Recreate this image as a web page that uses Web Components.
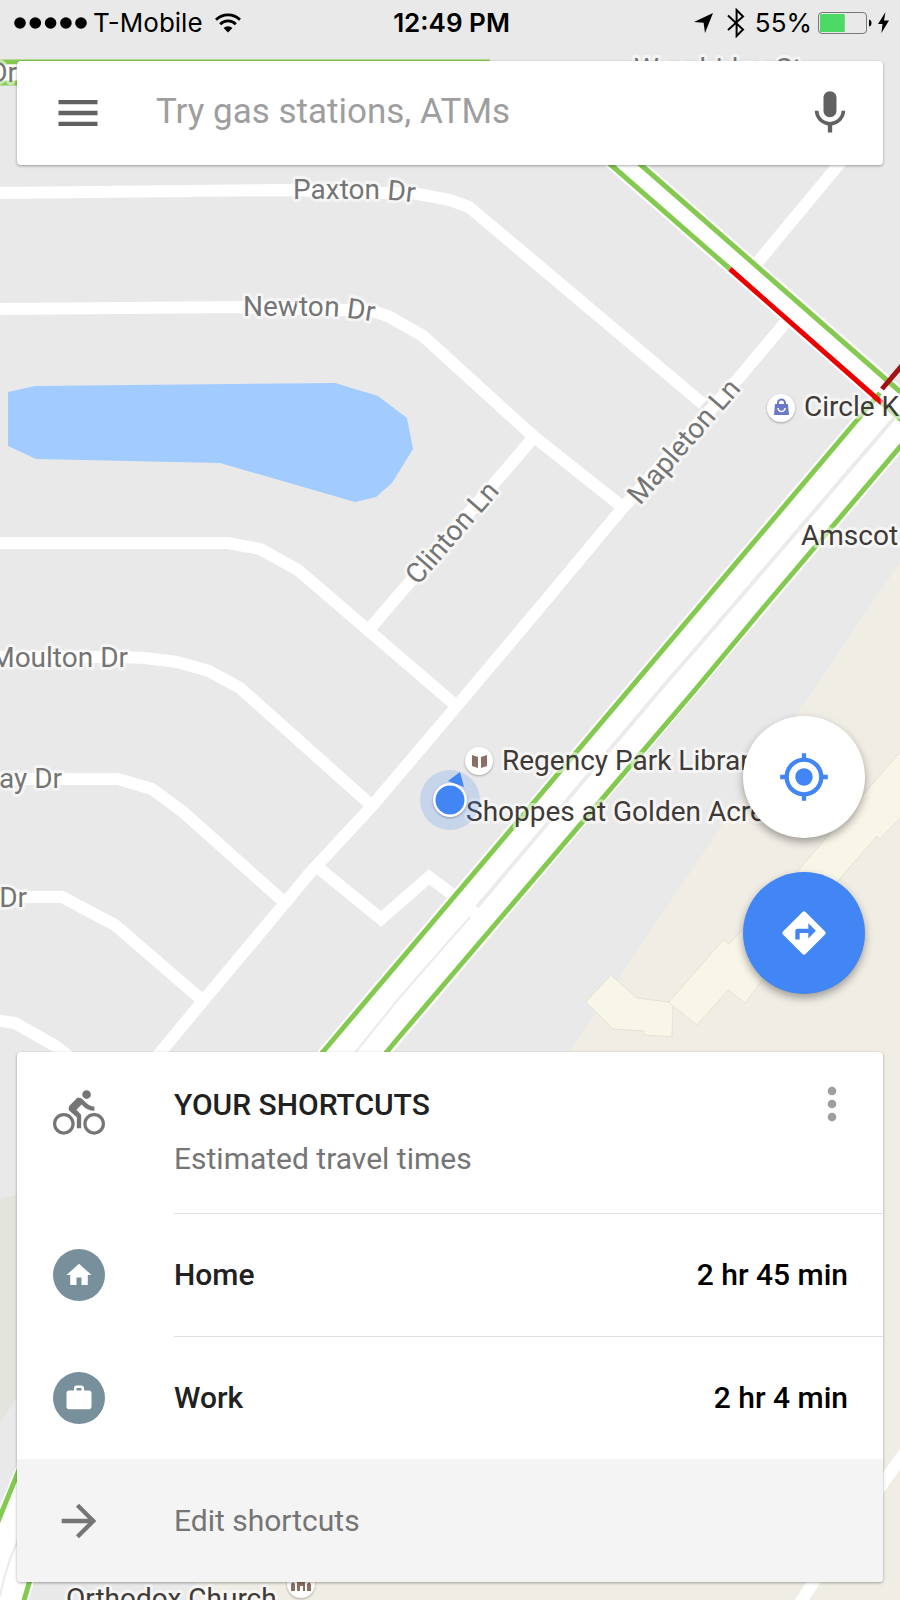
<!DOCTYPE html>
<html lang="en">
<head>
<meta charset="utf-8">
<meta name="viewport" content="width=device-width, initial-scale=1">
<title>Maps</title>
<style>
    body{
        margin: 0;
        font-family: Roboto, "Liberation Sans", sans-serif;
        background: #e9e9e9;
    }
</style>
</head>
<body>
<maps-app>
    <map-canvas slot="map"></map-canvas>
    <status-bar carrier="T-Mobile" time="12:49 PM" battery="55"></status-bar>
    <search-bar placeholder="Try gas stations, ATMs"></search-bar>
    <map-actions>
        <round-button label="My location"><ui-icon name="location"></ui-icon></round-button>
        <round-button label="Directions" primary><ui-icon name="directions"></ui-icon></round-button>
    </map-actions>
    <shortcuts-card>
        <span slot="title">YOUR SHORTCUTS</span>
        <span slot="subtitle">Estimated travel times</span>
        <shortcut-row icon="home" time="2 hr 45 min">Home</shortcut-row>
        <shortcut-row icon="work" time="2 hr 4 min">Work</shortcut-row>
        <span slot="action">Edit shortcuts</span>
    </shortcuts-card>
</maps-app>

<script>
const ICONS = {
    menu: 'M3 18h18v-2H3v2zm0-5h18v-2H3v2zm0-7v2h18V6H3z',
    mic: 'M12 14c1.66 0 2.99-1.34 2.99-3L15 5c0-1.66-1.34-3-3-3S9 3.34 9 5v6c0 1.66 1.34 3 3 3zm5.3-3c0 3-2.54 5.1-5.3 5.1S6.7 14 6.7 11H5c0 3.41 2.72 6.23 6 6.72V21h2v-3.28c3.28-.48 6-3.3 6-6.72h-1.7z',
    location: 'M12 8c-2.21 0-4 1.79-4 4s1.79 4 4 4 4-1.79 4-4-1.79-4-4-4zm8.94 3c-.46-4.17-3.77-7.48-7.94-7.94V1h-2v2.06C6.83 3.52 3.52 6.83 3.06 11H1v2h2.06c.46 4.17 3.77 7.48 7.94 7.94V23h2v-2.06c4.17-.46 7.48-3.77 7.94-7.94H23v-2h-2.06zM12 19c-3.87 0-7-3.13-7-7s3.13-7 7-7 7 3.13 7 7-3.13 7-7 7z',
    directions: 'M21.71 11.29l-9-9c-.39-.39-1.02-.39-1.41 0l-9 9c-.39.39-.39 1.02 0 1.41l9 9c.39.39 1.02.39 1.41 0l9-9c.39-.38.39-1.01 0-1.41zM14 14.5V12h-4v3H8v-4c0-.55.45-1 1-1h5V7.5l3.5 3.5-3.5 3.5z',
    bike: 'M15.5 5.5c1.1 0 2-.9 2-2s-.9-2-2-2-2 .9-2 2 .9 2 2 2zM5 12c-2.8 0-5 2.2-5 5s2.2 5 5 5 5-2.2 5-5-2.2-5-5-5zm0 8.5c-1.9 0-3.5-1.600-3.5-3.5s1.6-3.5 3.5-3.5 3.5 1.6 3.5 3.5-1.6 3.5-3.5 3.5zm5.8-10l2.4-2.4.8.8c1.3 1.3 3 2.1 5.1 2.1V9c-1.5 0-2.7-.6-3.6-1.5l-1.9-1.9c-.5-.4-1-.6-1.6-.6s-1.1.2-1.4.6L7.8 8.4c-.4.4-.6.9-.6 1.4 0 .6.2 1.1.6 1.4L11 14v5h2v-6.2l-2.2-2.3zM19 12c-2.8 0-5 2.2-5 5s2.2 5 5 5 5-2.2 5-5-2.2-5-5-5zm0 8.5c-1.9 0-3.5-1.6-3.5-3.5s1.6-3.5 3.5-3.5 3.5 1.6 3.5 3.5-1.6 3.5-3.5 3.5z',
    more: 'M12 8c1.1 0 2-.9 2-2s-.9-2-2-2-2 .9-2 2 .9 2 2 2zm0 2c-1.1 0-2 .9-2 2s.9 2 2 2 2-.9 2-2-.9-2-2-2zm0 6c-1.1 0-2 .9-2 2s.9 2 2 2 2-.9 2-2-.9-2-2-2z',
    home: 'M10 20v-6h4v6h5v-8h3L12 3 2 12h3v8z',
    work: 'M20 6h-4V4c0-1.11-.89-2-2-2h-4c-1.11 0-2 .89-2 2v2H4c-1.11 0-1.99.89-1.99 2L2 19c0 1.11.89 2 2 2h16c1.11 0 2-.89 2-2V8c0-1.11-.89-2-2-2zm-6 0h-4V4h4v2z',
    arrow: 'M12 4l-1.41 1.41L16.17 11H4v2h12.17l-5.58 5.59L12 20l8-8z'
};

class UiIcon extends HTMLElement{
    constructor(){
        super();
        this.attachShadow({mode: 'open'});
    }

    connectedCallback(){
        this.shadowRoot.innerHTML = `
            <style>
                :host{
                    display: block;
                    flex: none;
                    width: var(--icon-size, 52px);
                    height: var(--icon-size, 52px);
                }
                svg{
                    display: block;
                    width: 100%;
                    height: 100%;
                    fill: currentColor;
                }
            </style>
            <svg viewBox="0 0 24 24" aria-hidden="true"><path d="${ICONS[this.getAttribute('name')]}"/></svg>
        `;
    }
}

class MapsApp extends HTMLElement{
    constructor(){
        super();
        this.attachShadow({mode: 'open'});
        this.shadowRoot.innerHTML = `
            <style>
                :host{
                    display: flex;
                    flex-direction: column;
                    position: relative;
                    min-height: 100vh;
                    overflow: hidden;
                }
                /* the map fills the screen below the other parts */
                .map{
                    position: absolute;
                    inset: 0;
                }
                main{
                    position: relative;
                    flex: 1;
                    display: flex;
                    flex-direction: column;
                    padding-bottom: 18px;
                }
            </style>
            <div class="map"><slot name="map"></slot></div>
            <main><slot></slot></main>
        `;
    }
}

class StatusBar extends HTMLElement{
    constructor(){
        super();
        this.attachShadow({mode: 'open'});
    }

    connectedCallback(){
        const battery = Number(this.getAttribute('battery'));
        this.shadowRoot.innerHTML = `
            <style>
                :host{
                    display: grid;
                    grid-template-columns: 1fr auto 1fr;
                    align-items: center;
                    height: 45px;
                    margin-bottom: 16px;
                    padding: 0 11px 0 14px;
                    font: 400 26px/45px Inter, "Liberation Sans", sans-serif;
                    color: #000;
                }
                div{
                    display: flex;
                    align-items: center;
                    gap: 6px;
                }
                .left svg:last-child{
                    margin-left: 6px;
                }
                .right{
                    justify-content: flex-end;
                }
                .right svg:first-child{
                    margin-right: 4px;
                }
                .time{
                    font-weight: 600;
                }
                svg{
                    display: block;
                    flex: none;
                }
            </style>
            <div class="left">
                <svg width="73" height="12" viewBox="0 0 73 12" aria-hidden="true">
                    <circle cx="6" cy="6" r="5.8"/><circle cx="21.3" cy="6" r="5.8"/><circle cx="36.6" cy="6" r="5.8"/><circle cx="51.9" cy="6" r="5.8"/><circle cx="67" cy="6" r="5.8"/>
                </svg>
                <span>${this.getAttribute('carrier')}</span>
                <svg width="26" height="20" viewBox="0 0 26 20" aria-hidden="true">
                    <path d="M1 6.8a17 17 0 0 1 24 0M5.2 11.2a11 11 0 0 1 15.6 0" fill="none" stroke="#000" stroke-width="2.8"/>
                    <path d="M8.6 15.1a6.3 6.3 0 0 1 8.8 0L13 19.6z"/>
                </svg>
            </div>
            <span class="time">${this.getAttribute('time')}</span>
            <div class="right">
                <svg width="19" height="20" viewBox="0 0 19 20" aria-hidden="true"><path d="M19 0L0 9l9.6.8L11 20z"/></svg>
                <svg width="26" height="30" viewBox="0 0 26 30" aria-hidden="true"><path d="M5 7.5l15 14L13.6 28V2L20 8.5 5 22" fill="none" stroke="#000" stroke-width="2"/></svg>
                <span>${battery}%</span>
                <svg width="54" height="22" viewBox="0 0 54 22" aria-hidden="true">
                    <rect x=".5" y=".5" width="48" height="21" rx="3.5" fill="none" stroke="#777"/>
                    <rect x="2" y="2" width="${45 * battery / 100}" height="18" rx="1" fill="#4cd964"/>
                    <path d="M51 7.5q2.500.5 2.500 3.500t-2.500 3.500z"/>
                </svg>
                <svg width="11" height="21" viewBox="0 0 11 21" aria-hidden="true"><path d="M7.500 0L0 12h4.500L3.400 21 11 8.500H6z"/></svg>
            </div>
        `;
    }
}

class SearchBar extends HTMLElement{
    constructor(){
        super();
        this.attachShadow({mode: 'open'});
    }

    connectedCallback(){
        this.shadowRoot.innerHTML = `
            <style>
                :host{
                    display: block;
                    margin: 0 17px;
                }
                form{
                    display: flex;
                    align-items: center;
                    height: 104px;
                    padding: 0 27px 0 35px;
                    border-radius: 4px;
                    background: #fff;
                    box-shadow: 0 1px 3px rgba(0,0,0,.35);
                }
                button{
                    flex: none;
                    padding: 0;
                    border: 0;
                    background: none;
                    color: #616161;
                }
                input{
                    flex: 1;
                    min-width: 0;
                    margin: 0 52px;
                    padding: 0 0 2px;
                    border: 0;
                    outline: 0;
                    background: none;
                    font: 400 35px/44px Roboto, "Liberation Sans", sans-serif;
                    color: #212121;
                }
                input::placeholder{
                    color: #9e9e9e;
                    opacity: 1;
                }
            </style>
            <form role="search">
                <button type="button" aria-label="Menu"><ui-icon name="menu"></ui-icon></button>
                <input type="text" aria-label="Search" placeholder="${this.getAttribute('placeholder')}">
                <button type="button" aria-label="Voice search"><ui-icon name="mic"></ui-icon></button>
            </form>
        `;
    }
}

class MapActions extends HTMLElement{
    constructor(){
        super();
        this.attachShadow({mode: 'open'});
        this.shadowRoot.innerHTML = `
            <style>
                :host{
                    flex: 1;
                    display: flex;
                    flex-direction: column;
                    align-items: flex-end;
                    justify-content: flex-end;
                    gap: 34px;
                    padding: 34px 35px 58px;
                }
            </style>
            <slot></slot>
        `;
    }
}

class RoundButton extends HTMLElement{
    constructor(){
        super();
        this.attachShadow({mode: 'open'});
        this.shadowRoot.innerHTML = `
            <style>
                :host{
                    display: block;
                }
                button{
                    display: grid;
                    place-items: center;
                    width: 122px;
                    height: 122px;
                    padding: 0;
                    border: 0;
                    border-radius: 50%;
                    background: #fff;
                    color: #4285f4;
                    box-shadow: 0 4px 8px rgba(0,0,0,.35);
                }
                :host([primary]) button{
                    background: #4285f4;
                    color: #fff;
                }
            </style>
            <button type="button"><slot></slot></button>
        `;
    }

    connectedCallback(){
        this.shadowRoot.querySelector('button').setAttribute('aria-label', this.getAttribute('label'));
    }
}

class ShortcutsCard extends HTMLElement{
    constructor(){
        super();
        this.attachShadow({mode: 'open'});
        this.shadowRoot.innerHTML = `
            <style>
                :host{
                    display: block;
                    margin: 0 17px;
                    border-radius: 4px;
                    background: #fff;
                    box-shadow: 0 1px 3px rgba(0,0,0,.35);
                    overflow: hidden;
                    font-size: 30px;
                    line-height: 54px;
                    color: #757575;
                }
                header{
                    display: flex;
                    align-items: flex-start;
                    padding: 26px 25px 27px 36px;
                }
                .bike{
                    margin: 9px 69px 0 0;
                }
                .titles{
                    flex: 1;
                }
                h2, p{
                    margin: 0;
                    font-size: inherit;
                    font-weight: 400;
                }
                h2{
                    font-weight: 500;
                    color: #212121;
                }
                button{
                    padding: 0;
                    border: 0;
                    background: none;
                    font: inherit;
                    color: inherit;
                }
                .more{
                    color: #9e9e9e;
                }
                .edit{
                    display: flex;
                    align-items: center;
                    gap: 69px;
                    width: 100%;
                    height: 123px;
                    padding: 0 36px;
                    background: #f4f4f4;
                    text-align: left;
                }
            </style>
            <header>
                <ui-icon class="bike" name="bike"></ui-icon>
                <div class="titles">
                    <h2><slot name="title"></slot></h2>
                    <p><slot name="subtitle"></slot></p>
                </div>
                <button class="more" type="button" aria-label="More options"><ui-icon name="more"></ui-icon></button>
            </header>
            <slot></slot>
            <button class="edit" type="button"><ui-icon name="arrow"></ui-icon><slot name="action"></slot></button>
        `;
    }
}

class ShortcutRow extends HTMLElement{
    constructor(){
        super();
        this.attachShadow({mode: 'open'});
    }

    connectedCallback(){
        this.shadowRoot.innerHTML = `
            <style>
                :host{
                    display: block;
                }
                button{
                    display: flex;
                    align-items: center;
                    gap: 69px;
                    width: 100%;
                    height: 123px;
                    padding: 0 0 0 36px;
                    border: 0;
                    background: none;
                    font: inherit;
                    font-weight: 500;
                    color: #212121;
                    text-align: left;
                }
                .badge{
                    --icon-size: 30px;
                    flex: none;
                    display: grid;
                    place-items: center;
                    width: 52px;
                    height: 52px;
                    border-radius: 50%;
                    background: #78909c;
                    color: #fff;
                }
                .text{
                    flex: 1;
                    align-self: stretch;
                    display: flex;
                    align-items: center;
                    justify-content: space-between;
                    padding-right: 35px;
                    border-top: 1px solid #e0e0e0;
                }
                .time{
                    color: #000;
                }
            </style>
            <button type="button">
                <span class="badge"><ui-icon name="${this.getAttribute('icon')}"></ui-icon></span>
                <span class="text"><span><slot></slot></span><span class="time">${this.getAttribute('time')}</span></span>
            </button>
        `;
    }
}

class MapCanvas extends HTMLElement{
    constructor(){
        super();
        this.attachShadow({mode: 'open'});
        this.shadowRoot.innerHTML = `
            <style>
                :host{
                    display: block;
                    height: 100%;
                }
                svg{
                    display: block;
                    width: 100%;
                    height: 100%;
                }
                text{
                    font: 400 28px Roboto, "Liberation Sans", sans-serif;
                    fill: #757575;
                    stroke: rgba(255,255,255,.55);
                    stroke-width: 6px;
                    stroke-linejoin: round;
                    paint-order: stroke;
                }
                .poi text{
                    fill: #403a37;
                }
                .building{
                    fill: #f8f6e8;
                    stroke: #e6e2d4;
                }
                .roads, .casing, .traffic, .median{
                    fill: none;
                }
                .roads{
                    stroke: #fff;
                    stroke-width: 12px;
                }
                .casing{
                    stroke: #fff;
                    stroke-width: 9px;
                }
                .traffic{
                    stroke: #84ca50;
                    stroke-width: 5px;
                }
                .median{
                    stroke: #ebebeb;
                    stroke-width: 4px;
                }
                .median .thin{
                    stroke-width: 2px;
                }
                .pin{
                    fill: #fff;
                    filter: drop-shadow(0 1px 1px rgba(0,0,0,.3));
                }
            </style>
            <svg viewBox="0 0 900 1600" preserveAspectRatio="xMidYMin slice" role="img" aria-label="Map">
                <defs>
                    <path id="paxton" d="M293 199H374Q394 199 450 207"/>
                    <path id="newton" d="M243 316H326Q344 316 400 326"/>
                </defs>
                <rect width="900" height="1600" fill="#e9e9e9"/>

                <!-- areas -->
                <path d="M900 562L813 690 570 1051 197 1582V1600H900z" fill="#f0ede5"/>
                <path d="M0 1199L17 1194H60V1330L17 1397 0 1423z" fill="#e3e4dc"/>
                <path d="M8 392L35 386 335 383 378 396 407 418 413 449 392 483 376 497 355 502 220 463 36 459 8 446z" fill="#a2cbff"/>
                <path class="building" d="M611 975L637 998 669 1002 673 1006 672 1037 644 1035V1031L613 1029 586 1002z"/>
                <path class="building" d="M669 1002L723 940 729 944 797 872 905 746V813L880 839 877 836 837 882 745 1003 728 990 697 1025 673 1006z"/>

                <!-- streets -->
                <g class="roads">
                    <path d="M-5 193L290 190 418 194 450 200 469 207 703 404"/>
                    <path d="M-5 309L245 307 372 311 388 316 423 336 533 436 620 505"/>
                    <path d="M-5 543H228L260 549 298 570 453 703"/>
                    <path d="M367 632L533 438"/>
                    <path d="M-5 657H120L145 658 177 662 209 671 240 688 371 805"/>
                    <path d="M-5 779H118L152 789 183 812 284 902"/>
                    <path d="M-5 897H62L115 925 202 1000"/>
                    <path d="M-5 1020L15 1023 57 1047 80 1066"/>
                    <path d="M316 866L381 919 429 877 465 904"/>
                    <path d="M855 145L757 263"/>
                    <path d="M800 306L785 323 737 380 621 510 546 600 456 707 372 806 309 874 285 903 203 1001 144 1072"/>
                    <path d="M915 1438L883 1483 813 1583 798 1606"/>
                </g>

                <!-- highways -->
                <path d="M0 60H490V84H0z" fill="#fff"/>
                <path d="M594 150L624 150 900 390V452L386 1060H316L860 418 882 404z" fill="#fff"/>
                <path d="M17 1476L0 1520V1600H24L31 1570z" fill="#fff"/>
                <g class="casing">
                    <path d="M594 150L882 403 900 420M624 150L885 378 905 396"/>
                    <path d="M880 393L316 1060M905 441L380 1060"/>
                    <path d="M25 1457L-3 1524M34 1566L23 1604"/>
                </g>
                <g class="median">
                    <path d="M895 417L738 600 660 690 477 907"/>
                    <path class="thin" d="M470 917L400 997 350 1059"/>
                    <path class="thin" d="M18 1540Q6 1566 0 1596"/>
                </g>
                <g class="traffic">
                    <path d="M0 62H490M0 83H40"/>
                    <path d="M594 150L730 269M882 403L905 423M624 150L905 396"/>
                    <path d="M880 393L316 1060M905 441L770 600 695 690 400 1036 380 1060"/>
                    <path d="M25 1455L-3 1524M34 1566L23 1604"/>
                    <path d="M730 269L882 403" stroke="#eb0000"/>
                    <path d="M905 362L882 389" stroke="#a31114"/>
                </g>

                <!-- street names -->
                <g>
                    <text x="17" y="82" text-anchor="end">Dr</text>
                    <text x="634" y="78">Woodridge St</text>
                    <text><textPath href="#paxton">Paxton Dr</textPath></text>
                    <text><textPath href="#newton">Newton Dr</textPath></text>
                    <text transform="translate(640 506) rotate(-49)">Mapleton Ln</text>
                    <text transform="translate(418 586) rotate(-49)">Clinton Ln</text>
                    <text x="128" y="667" text-anchor="end">Moulton Dr</text>
                    <text x="62" y="788" text-anchor="end">ay Dr</text>
                    <text x="27" y="907" text-anchor="end">Dr</text>
                </g>

                <!-- places -->
                <g class="poi">
                    <circle class="pin" cx="781" cy="408" r="14"/>
                    <path d="M775 404h13l1 11h-15z" fill="#6a78c9"/>
                    <path d="M778 404v-1a3.500 3.500 0 0 1 7 0v1" fill="none" stroke="#6a78c9" stroke-width="2"/>
                    <path d="M778 408a3.500 3.500 0 0 0 7 0" fill="none" stroke="#fff" stroke-width="1.500"/>
                    <text x="804" y="416">Circle K</text>
                    <text x="801" y="545">Amscot</text>
                    <circle class="pin" cx="479" cy="761" r="14"/>
                    <path d="M472 755l6 2v11l-6-2zM487 755l-6 2v11l6-2z" fill="#8d6e63"/>
                    <text x="502" y="770">Regency Park Library</text>
                    <text x="466" y="821">Shoppes at Golden Acres</text>
                    <circle class="pin" cx="301" cy="1584" r="14"/>
                    <path d="M291 1591v-7l2-2 2 2v7zM307 1591v-7l2-2 2 2v7zM297 1591v-11l4-4 4 4v11h-2v-5h-3v5z" fill="#8d6e63"/>
                    <text x="66" y="1608">Orthodox Church</text>
                </g>

                <!-- current position -->
                <circle cx="450" cy="800" r="30" fill="#4285f4" fill-opacity=".2"/>
                <path d="M460 772l4 15-16-6z" fill="#4285f4"/>
                <circle class="pin" cx="450" cy="800" r="17"/>
                <circle cx="450" cy="800" r="14.500" fill="#4285f4"/>
            </svg>
        `;
    }
}

customElements.define('ui-icon', UiIcon);
customElements.define('maps-app', MapsApp);
customElements.define('map-canvas', MapCanvas);
customElements.define('status-bar', StatusBar);
customElements.define('search-bar', SearchBar);
customElements.define('map-actions', MapActions);
customElements.define('round-button', RoundButton);
customElements.define('shortcuts-card', ShortcutsCard);
customElements.define('shortcut-row', ShortcutRow);
</script>
</body>
</html>
